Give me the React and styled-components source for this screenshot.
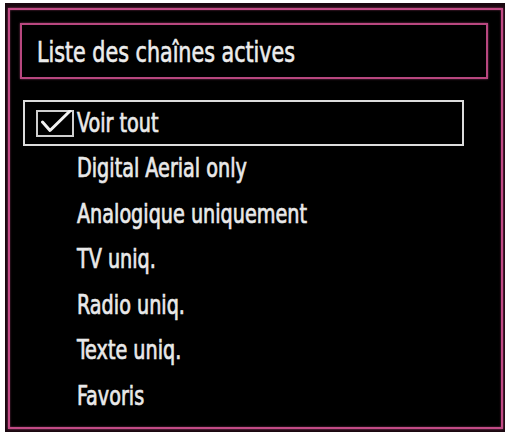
import React from 'react'
import styled, { createGlobalStyle } from 'styled-components'

const GlobalStyle = createGlobalStyle`
	html, body {
		margin: 0;
		padding: 0;
		background: #ffffff;
	}
	body {
		font-family: "DejaVu Sans Condensed", "DejaVu Sans", sans-serif;
	}
`

const items = [
	'Voir tout',
	'Digital Aerial only',
	'Analogique uniquement',
	'TV uniq.',
	'Radio uniq.',
	'Texte uniq.',
	'Favoris',
]

const Check = ({ visible }) => (
	<CheckSlot>
		{visible && (
			<svg width='38' height='27' viewBox='0 0 38 27'>
				<rect x='1' y='1' width='36' height='25' fill='none' stroke='#cfcfcf' strokeWidth='2' />
				<path d='M6.5 12 L14 20.5 L34 1' fill='none' stroke='#f2f2f2' strokeWidth='3' strokeLinecap='round' strokeLinejoin='round' />
			</svg>
		)}
	</CheckSlot>
)

const App = () => {
	const selected = 0
	return (
		<>
			<GlobalStyle />
			<Frame>
				<Panel>
					<Title>
						<TitleText>Liste des chaînes actives</TitleText>
					</Title>
					<List>
						{items.map((label, i) => (
							<Row key={label} $active={i === selected}>
								<Check visible={i === selected} />
								<Label>{label}</Label>
							</Row>
						))}
					</List>
				</Panel>
			</Frame>
		</>
	)
}

const Frame = styled.div`
	box-sizing: border-box;
	width: 500px;
	height: 429px;
	margin: 3px 0 0 5px;
	padding: 5px 2px 3px 3px;
	background: #1a0810;
`

const Panel = styled.div`
	box-sizing: border-box;
	height: 100%;
	border: 2px solid #c24b86;
	box-shadow: 0 0 2px rgba(214, 90, 150, 0.7), inset 0 0 2px rgba(214, 90, 150, 0.6);
	background: #000000;
	padding: 13px 0 0 10px;
	display: flex;
	flex-direction: column;
`

const Title = styled.div`
	box-sizing: border-box;
	width: 468px;
	height: 56px;
	border: 2px solid #b8477f;
	box-shadow: 0 0 2px rgba(214, 90, 150, 0.6);
	padding: 4px 0 0 15px;
	display: flex;
	align-items: center;
`

const TitleText = styled.span`
	display: inline-block;
	color: #ececec;
	font-size: 28px;
	line-height: 32px;
	white-space: nowrap;
	transform: scaleX(0.82);
	transform-origin: left center;
	-webkit-text-stroke: 0.6px #ececec;
`

const List = styled.div`
	display: flex;
	flex-direction: column;
	margin: 21px 0 0 3px;
`

const Row = styled.div`
	box-sizing: border-box;
	width: 441px;
	height: 45.5px;
	border: 2px solid ${(p) => (p.$active ? '#dcdcdc' : 'transparent')};
	padding-left: 11px;
	display: flex;
	align-items: center;
	gap: 3px;
`

const CheckSlot = styled.div`
	width: 38px;
	height: 27px;
	flex-shrink: 0;
	margin-top: 1px;
`

const Label = styled.span`
	display: inline-block;
	color: #e9e9e9;
	font-size: 27px;
	line-height: 30px;
	white-space: nowrap;
	transform: scaleX(0.79);
	transform-origin: left center;
	-webkit-text-stroke: 0.7px #e9e9e9;
`

export default App
